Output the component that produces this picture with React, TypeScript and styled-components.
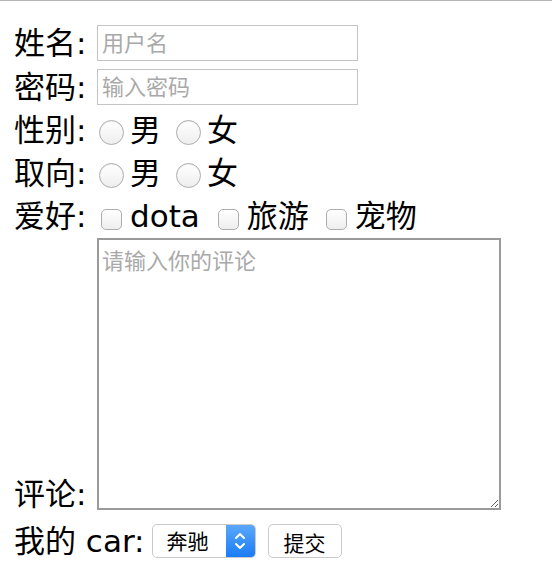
import React from "react";
import styled, { createGlobalStyle } from "styled-components";

const FONT = `"DejaVu Sans", "Noto Sans CJK SC", sans-serif`;

const Global = createGlobalStyle`
  html, body { margin: 0; padding: 0; background: #fff; }
  body {
    font-family: ${FONT};
    color: #000;
    border-top: 1px solid #b4b4b4;
  }
`;

const Form = styled.form`
  display: flex;
  flex-direction: column;
  padding: 20px 0 0 14px;
  font-size: 31px;
`;

const Row = styled.div<{ $h: number }>`
  display: flex;
  align-items: center;
  height: ${(p) => p.$h}px;
`;

const Label = styled.span`
  width: 83px;
  flex: none;
  white-space: nowrap;
  line-height: 1;
`;

const TextInput = styled.input`
  box-sizing: border-box;
  width: 261px;
  height: 36px;
  margin: 0;
  border: 1px solid #c4c4c4;
  padding: 1px 4px 0;
  font-family: ${FONT};
  font-size: 22px;
  outline: none;
  &::placeholder { color: #a9a9a9; }
`;

const Option = styled.label<{ $gap: number }>`
  display: flex;
  align-items: center;
  margin-right: ${(p) => p.$gap}px;
  line-height: 1;
`;

const Radio = styled.input.attrs({ type: "radio" })`
  appearance: none;
  flex: none;
  box-sizing: border-box;
  width: 25px;
  height: 25px;
  margin: 3px 6px 0 2px;
  border-radius: 50%;
  border: 1px solid #adadad;
  background: linear-gradient(#ffffff, #eeeeee);
  box-shadow: inset 0 1px 1px rgba(0, 0, 0, 0.06);
`;

const Check = styled.input.attrs({ type: "checkbox" })`
  appearance: none;
  flex: none;
  box-sizing: border-box;
  width: 21px;
  height: 21px;
  margin: 5px 8px 0 4px;
  border-radius: 5px;
  border: 1px solid #adadad;
  background: linear-gradient(#ffffff, #eeeeee);
`;

const CommentRow = styled.div`
  display: flex;
  align-items: flex-end;
`;

const TextArea = styled.textarea`
  box-sizing: border-box;
  width: 404px;
  height: 272px;
  margin: 0;
  border: 2px solid #9a9a9a;
  padding: 3px 3px;
  resize: both;
  font-family: ${FONT};
  font-size: 22px;
  outline: none;
  &::placeholder { color: #a9a9a9; }
`;

const CarLabel = styled.span`
  white-space: nowrap;
  line-height: 1;
  margin-right: 7px;
`;

const SelectBox = styled.div`
  display: flex;
  box-sizing: border-box;
  width: 104px;
  height: 34px;
  border: 1px solid #c9c9c9;
  border-radius: 5px;
  overflow: hidden;
  margin-right: 12px;
  background: #fff;
`;

const NativeSelect = styled.select`
  appearance: none;
  flex: 1;
  min-width: 0;
  border: none;
  background: transparent;
  padding: 1px 0 0 14px;
  font-family: ${FONT};
  font-size: 21px;
  color: #000;
  outline: none;
`;

const Arrows = styled.span`
  flex: none;
  width: 29px;
  display: flex;
  align-items: center;
  justify-content: center;
  background: linear-gradient(#5aa8fb, #1a7cf6);
  pointer-events: none;
`;

const Button = styled.button`
  box-sizing: border-box;
  width: 74px;
  height: 34px;
  border: 1px solid #cacaca;
  border-radius: 5px;
  background: #fff;
  font-family: ${FONT};
  font-size: 21px;
  padding: 1px 0 0;
  color: #000;
`;

export default function App() {
  return (
    <>
      <Global />
      <Form onSubmit={(e) => e.preventDefault()}>
        <Row $h={44}>
          <Label>姓名:</Label>
          <TextInput placeholder="用户名" />
        </Row>
        <Row $h={44}>
          <Label>密码:</Label>
          <TextInput type="password" placeholder="输入密码" />
        </Row>
        <Row $h={43}>
          <Label>性别:</Label>
          <Option $gap={13}><Radio name="sex" />男</Option>
          <Option $gap={0}><Radio name="sex" />女</Option>
        </Row>
        <Row $h={43}>
          <Label>取向:</Label>
          <Option $gap={13}><Radio name="ori" />男</Option>
          <Option $gap={0}><Radio name="ori" />女</Option>
        </Row>
        <Row $h={43}>
          <Label>爱好:</Label>
          <Option $gap={14}><Check />dota</Option>
          <Option $gap={13}><Check />旅游</Option>
          <Option $gap={0}><Check />宠物</Option>
        </Row>
        <CommentRow>
          <Label>评论:</Label>
          <TextArea placeholder="请输入你的评论" />
        </CommentRow>
        <Row $h={62}>
          <CarLabel>我的 car:</CarLabel>
          <SelectBox>
            <NativeSelect defaultValue="benz">
              <option value="benz">奔驰</option>
              <option value="bmw">宝马</option>
            </NativeSelect>
            <Arrows>
              <svg width="12" height="22" viewBox="0 0 12 22" fill="none" stroke="#fff" strokeWidth="2" strokeLinecap="round" strokeLinejoin="round">
                <path d="M2 8 L6 4 L10 8" />
                <path d="M2 14 L6 18 L10 14" />
              </svg>
            </Arrows>
          </SelectBox>
          <Button type="submit">提交</Button>
        </Row>
      </Form>
    </>
  );
}
